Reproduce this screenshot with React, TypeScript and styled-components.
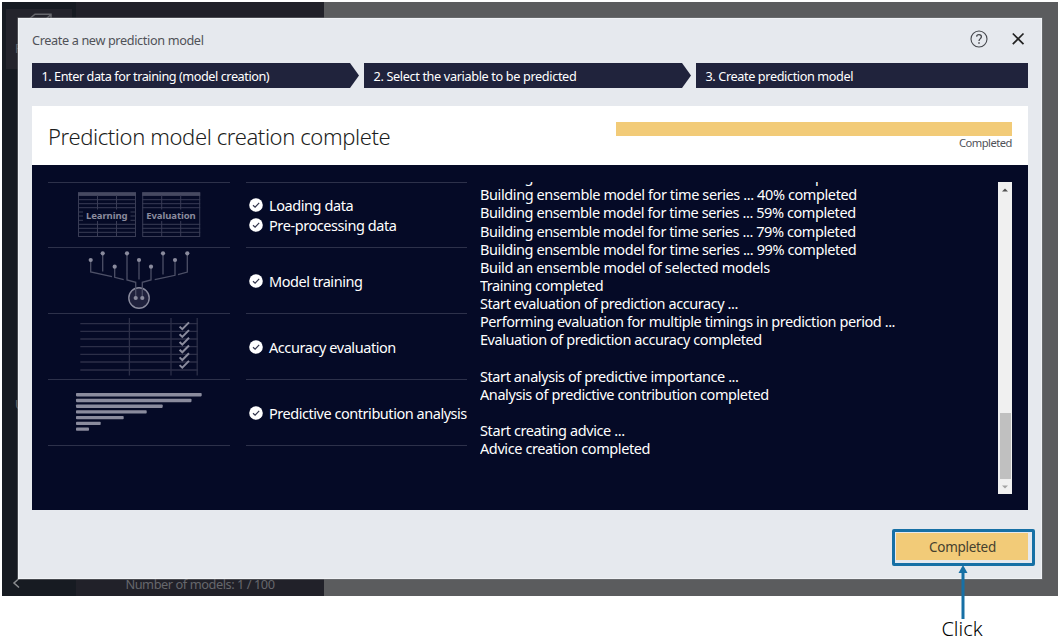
import React from "react";
import styled, { createGlobalStyle } from "styled-components";

const GlobalStyle = createGlobalStyle`
  * { box-sizing: border-box; }
  body {
    margin: 0;
    background: #fff;
    font-family: "Noto Sans", "Open Sans", sans-serif;
    overflow: hidden;
  }
`;

const Page = styled.main`
  position: relative;
  width: 1060px;
  height: 638px;
  padding: 2px;
`;

const Screen = styled.div`
  display: flex;
  width: 1056px;
  height: 594px;
  background: #5b5c5e;
  color: #66676c;
`;

const Rail = styled.nav`
  display: flex;
  flex-direction: column;
  width: 74px;
  padding: 7px 4px 5px;
  background: #171b22;
`;

const RailTile = styled.div`
  height: 60px;
  padding: 4px 9px;
  background: #24242c;
  font-size: 12px;
  line-height: 16px;
  svg { display: block; margin: 0 0 6px 12px; }
`;

const RailLabel = styled.div`
  margin: 328px 0 auto 9px;
  font-size: 12px;
  line-height: 16px;
`;

const BackIcon = styled.svg`
  display: block;
  margin-left: 5px;
`;

const Sidebar = styled.aside`
  display: flex;
  align-items: flex-end;
  justify-content: center;
  width: 248px;
  padding-bottom: 2px;
  background: #212129;
  font-size: 12.8px;
  letter-spacing: -0.45px;
  line-height: 20px;
`;

const Dialog = styled.section`
  position: absolute;
  left: 18px;
  top: 18px;
  display: flex;
  flex-direction: column;
  width: 1024px;
  height: 561px;
  padding: 0 13px;
  background: #e6e9ee;
  border: 1px solid #f0f2f5;
  box-shadow: 0 0 0 0.5px #77797c;
`;

const TitleBar = styled.header`
  display: flex;
  align-items: center;
  height: 44px;
  padding: 0 3px 4px 0;
  flex-shrink: 0;
`;

const Title = styled.h1`
  flex: 1;
  margin: 0;
  padding-top: 2px;
  color: #505258;
  font-size: 12.7px;
  font-weight: 400;
  letter-spacing: -0.37px;
`;

const IconButton = styled.button`
  display: block;
  margin-left: 23px;
  padding: 0;
  border: 0;
  background: none;
  svg { display: block; }
`;

const Steps = styled.div`
  display: flex;
  gap: 5px;
  height: 25px;
  flex-shrink: 0;
`;

const Step = styled.div<{ $last?: boolean; $spacing: number }>`
  width: ${(p) => (p.$last ? 332 : 327)}px;
  padding-left: 9.5px;
  background: #20233c;
  clip-path: ${(p) =>
    p.$last ? "none" : "polygon(0 0, calc(100% - 9px) 0, 100% 50%, calc(100% - 9px) 100%, 0 100%)"};
  color: #fff;
  font-size: 12.7px;
  line-height: 26px;
  letter-spacing: ${(p) => p.$spacing}px;
`;

const Summary = styled.div`
  display: flex;
  justify-content: space-between;
  height: 59px;
  margin-top: 18px;
  padding: 16px 16px 0;
  background: #fff;
  flex-shrink: 0;
`;

const Heading = styled.h2`
  margin: -1px 0 0;
  color: #1c1d20;
  font-size: 22px;
  font-weight: 300;
  line-height: 30px;
  letter-spacing: -0.39px;
`;

const Progress = styled.div`
  width: 396px;
  color: #505258;
  font-size: 11.2px;
  line-height: 13px;
  letter-spacing: -0.5px;
  text-align: right;
`;

const ProgressBar = styled.div`
  height: 14px;
  background: #f2cb78;
`;

const Panel = styled.div`
  display: flex;
  height: 345px;
  padding: 17px 16px;
  background: #050a26;
  color: #fff;
  flex-shrink: 0;
`;

const Column = styled.div<{ $width: number }>`
  width: ${(p) => p.$width}px;
  height: 264px;
  border-bottom: 1px solid #2d314a;
  flex-shrink: 0;
`;

const Cell = styled.div<{ $first?: boolean }>`
  display: flex;
  flex-direction: column;
  justify-content: center;
  height: ${(p) => (p.$first ? 65 : 66)}px;
  border-top: 1px solid #2d314a;
  svg { display: block; flex-shrink: 0; }
`;

const TaskColumn = styled(Column)`
  margin-left: 16px;
`;

const Task = styled.div<{ $spacing: number }>`
  display: flex;
  align-items: center;
  gap: 6px;
  height: 20px;
  padding-left: 3px;
  font-size: 14.5px;
  white-space: nowrap;
  letter-spacing: ${(p) => p.$spacing}px;
`;

const Log = styled.div`
  flex: 1;
  height: 311px;
  margin-left: 13px;
  overflow: hidden;
`;

const LogLines = styled.div`
  margin-top: -14.8px;
`;

const LogLine = styled.div<{ $spacing: number }>`
  height: 18.14px;
  font-size: 14.5px;
  line-height: 18.14px;
  white-space: nowrap;
  letter-spacing: ${(p) => p.$spacing}px;
`;

const Scrollbar = styled.div`
  display: flex;
  flex-direction: column;
  align-items: center;
  width: 14px;
  height: 312px;
  margin-top: -0.5px;
  padding: 6px 0 5px;
  background: #f0f0f0;
  svg { display: block; }
`;

const Thumb = styled.div`
  width: 11px;
  height: 66px;
  margin: auto 0 6px;
  background: #c0c0c0;
`;

const Footer = styled.footer`
  display: flex;
  justify-content: flex-end;
  padding-top: 19px;
`;

const ButtonFrame = styled.div`
  width: 143px;
  height: 37px;
  margin-right: -7px;
  border: 3px solid #1770a5;
  border-radius: 2px;
  padding: 1px;
  flex-shrink: 0;
`;

const DoneButton = styled.button`
  display: block;
  width: 132px;
  height: 27px;
  margin: 0;
  padding: 0 0 0 1px;
  border: 0;
  background: #f2cb78;
  color: #46412f;
  font: 13.5px/29px "Noto Sans", sans-serif;
  letter-spacing: -0.3px;
`;

const Callout = styled.div`
  position: absolute;
  left: 922px;
  top: 565px;
  display: flex;
  flex-direction: column;
  align-items: center;
  width: 82px;
  color: #000;
  font-size: 20px;
  font-weight: 350;
  line-height: 18px;
  svg { display: block; }
`;

const CalloutText = styled.span`
  margin-left: -2px;
  height: 18px;
  line-height: 19px;
`;

const LINE = "#393c55";
const NODE = "#8a8b9d";
const GRID_ROWS = [16.7, 20.7, 24.7, 41.3, 45.3, 49.3];

const DataGrid = ({ x, label, width }: { x: number; label: string; width: number }) => (
  <g transform={`translate(${x} 0)`} stroke={LINE} fill="none">
    <rect x="0.5" y="9.8" width="57" height="43.7" />
    <rect x="0" y="9.3" width="58" height="3.6" fill="#464961" stroke="none" />
    {GRID_ROWS.map((y) => (
      <path key={y} d={`M0 ${y}H58`} />
    ))}
    {width < 45 && <path d="M0 29H5M0 33H5M0 37.3H5M52.5 29H58M52.5 33H58M52.5 37.3H58" />}
    <path d="M19.5 12V26.5M38.5 12V26.5M19.5 38V53M38.5 38V53" />
    <text
      x="28.8"
      y="36"
      textAnchor="middle"
      textLength={width}
      fill={NODE}
      stroke="none"
      fontSize="9.5"
      fontWeight="700"
    >
      {label}
    </text>
  </g>
);

const DataArt = () => (
  <svg width="182" height="64">
    <DataGrid x={30} label="Learning" width={41.5} />
    <DataGrid x={94.2} label="Evaluation" width={49.5} />
  </svg>
);

const NODES = [
  [42.7, 12], [54.7, 5.3], [66.7, 18.7], [79, 5.3], [91, 12],
  [103, 18.7], [115, 5.3], [127, 12], [139.3, 5.3],
];

const NetworkArt = () => (
  <svg width="182" height="65">
    <circle cx="91" cy="50" r="10.2" fill="#1f213c" stroke={NODE} strokeWidth="1.4" />
    <path
      d="M42.7 12V24L64 28.7M54.7 5V23.5M66.7 19V29.3L75.7 31.7M79 5V32L87.7 34.3V50M91 12V31.5M103 19V32L94.3 34.3V50M115 5V26.5M127 12V27.3L106.7 31.7M139.3 5V24L130 26.7"
      fill="none"
      stroke="#4d5067"
      strokeWidth="1.3"
    />
    {NODES.map(([x, y]) => (
      <circle key={x} cx={x} cy={y} r="2.1" fill={NODE} />
    ))}
    <circle cx="87.7" cy="50" r="2.1" fill={NODE} />
    <circle cx="94.3" cy="50" r="2.1" fill={NODE} />
  </svg>
);

const AccuracyArt = () => (
  <svg width="182" height="65">
    <path
      d="M32.3 9.7H150M32.3 17.3H150M32.3 25H150M32.3 32.7H150M32.3 40.3H150M32.3 48H150M32.3 56H150M81.4 4V61.5M123 4V61.5M149.2 4V61.5"
      stroke="#2c2f48"
      strokeWidth="1.3"
    />
    {[0, 1, 2, 3, 4, 5].map((i) => (
      <path
        key={i}
        d="M131.6 12.6L134.3 15.2L141 8.4"
        transform={`translate(0 ${i * 7.7})`}
        fill="none"
        stroke={NODE}
        strokeWidth="2"
      />
    ))}
  </svg>
);

const BARS = [125.7, 115.5, 86.7, 70.7, 47.7, 24.7, 13];

const ContributionArt = () => (
  <svg width="182" height="65">
    {BARS.map((w, i) => (
      <rect key={w} x="28" y={13 + i * 5.74} width={w} height="3.4" rx="0.8" fill={NODE} />
    ))}
  </svg>
);

const CheckBadge = () => (
  <svg width="14" height="14" viewBox="0 0 14 14">
    <circle cx="7" cy="7" r="6.8" fill="#fff" />
    <path d="M4 7.2L6.1 9.2L10.2 4.9" fill="none" stroke="#30334a" strokeWidth="1.2" />
  </svg>
);

const TASKS: [string, number][][] = [
  [["Loading data", -0.42], ["Pre-processing data", -0.42]],
  [["Model training", -0.47]],
  [["Accuracy evaluation", -0.43]],
  [["Predictive contribution analysis", -0.46]],
];

const LOG: [string, number][] = [
  ["Building ensemble model for time series ... 20% completed", -0.42],
  ["Building ensemble model for time series ... 40% completed", -0.4],
  ["Building ensemble model for time series ... 59% completed", -0.42],
  ["Building ensemble model for time series ... 79% completed", -0.42],
  ["Building ensemble model for time series ... 99% completed", -0.41],
  ["Build an ensemble model of selected models", -0.35],
  ["Training completed", -0.47],
  ["Start evaluation of prediction accuracy ...", -0.42],
  ["Performing evaluation for multiple timings in prediction period ...", -0.43],
  ["Evaluation of prediction accuracy completed", -0.44],
  ["", 0],
  ["Start analysis of predictive importance ...", -0.41],
  ["Analysis of predictive contribution completed", -0.42],
  ["", 0],
  ["Start creating advice ...", -0.4],
  ["Advice creation completed", -0.4],
];

export default function App() {
  return (
    <Page>
      <GlobalStyle />
      <Screen>
        <Rail>
          <RailTile>
            <svg width="26" height="22" viewBox="0 0 26 22" fill="none" stroke="#66676c" strokeWidth="1.5">
              <path d="M1 7L8 1.2H24V15L18 21H1ZM1 6H19L24 1.5" />
            </svg>
            P
          </RailTile>
          <RailLabel>U</RailLabel>
          <BackIcon width="10" height="16" viewBox="0 0 10 16" fill="none" stroke="#8b8d90" strokeWidth="1.5">
            <path d="M8 3.5L3 8L8 12.5" />
          </BackIcon>
        </Rail>
        <Sidebar>Number of models: 1 / 100</Sidebar>
      </Screen>

      <Dialog>
        <TitleBar>
          <Title>Create a new prediction model</Title>
          <IconButton aria-label="Help">
            <svg width="18" height="18" viewBox="0 0 18 18" fill="none" stroke="#45474c">
              <circle cx="9" cy="9" r="8" strokeWidth="1.1" />
              <path d="M6.6 6.6C6.8 3.9 11.4 4 11.4 6.8C11.4 8.6 9 8.7 9 11" strokeWidth="1.3" />
              <path d="M9 12.3V13.8" strokeWidth="1.5" />
            </svg>
          </IconButton>
          <IconButton aria-label="Close">
            <svg width="14" height="14" viewBox="0 0 14 14" fill="none" stroke="#222" strokeWidth="1.7">
              <path d="M1.8 1.5L12.5 12.2M12.5 1.5L1.8 12.2" />
            </svg>
          </IconButton>
        </TitleBar>
        <Steps>
          <Step $spacing={-0.45}>1. Enter data for training (model creation)</Step>
          <Step $spacing={-0.36}>2. Select the variable to be predicted</Step>
          <Step $last $spacing={-0.39}>3. Create prediction model</Step>
        </Steps>
        <Summary>
          <Heading>Prediction model creation complete</Heading>
          <Progress>
            <ProgressBar />
            Completed
          </Progress>
        </Summary>
        <Panel>
          <Column $width={182}>
            <Cell $first><DataArt /></Cell>
            <Cell><NetworkArt /></Cell>
            <Cell><AccuracyArt /></Cell>
            <Cell><ContributionArt /></Cell>
          </Column>
          <TaskColumn $width={221}>
            {TASKS.map((group, i) => (
              <Cell key={i} $first={i === 0}>
                {group.map(([label, spacing]) => (
                  <Task key={label} $spacing={spacing}>
                    <CheckBadge />
                    {label}
                  </Task>
                ))}
              </Cell>
            ))}
          </TaskColumn>
          <Log>
            <LogLines>
              {LOG.map(([line, spacing], i) => (
                <LogLine key={i} $spacing={spacing}>{line}</LogLine>
              ))}
            </LogLines>
          </Log>
          <Scrollbar>
            <svg width="6" height="4" viewBox="0 0 6 4"><path d="M0 3.5L3 0.5L6 3.5Z" fill="#505050" /></svg>
            <Thumb />
            <svg width="6" height="4" viewBox="0 0 6 4"><path d="M0 0.5L3 3.5L6 0.5Z" fill="#a3a3a3" /></svg>
          </Scrollbar>
        </Panel>
        <Footer>
          <ButtonFrame>
            <DoneButton>Completed</DoneButton>
          </ButtonFrame>
        </Footer>
      </Dialog>

      <Callout>
        <svg width="10" height="54" viewBox="0 0 10 54">
          <path d="M5 0L9.5 8H6.5V54H3.5V8H0.5Z" fill="#1770a5" />
        </svg>
        <CalloutText>Click</CalloutText>
      </Callout>
    </Page>
  );
}
